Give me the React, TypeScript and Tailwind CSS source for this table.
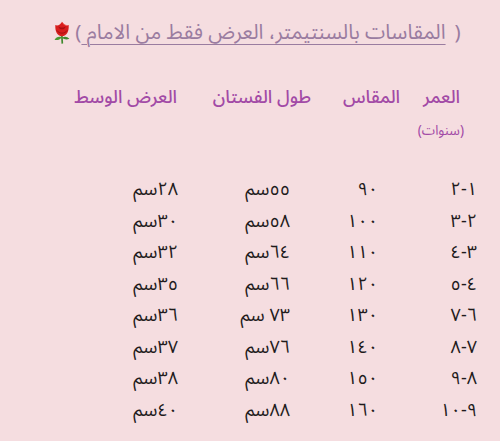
import React from "react";

const rows: [string, string, string, string][] = [
  ["١-٢", "٩٠", "٥٥سم", "٢٨سم"],
  ["٢-٣", "١٠٠", "٥٨سم", "٣٠سم"],
  ["٣-٤", "١١٠", "٦٤سم", "٣٢سم"],
  ["٤-٥", "١٢٠", "٦٦سم", "٣٥سم"],
  ["٦-٧", "١٣٠", "٧٣ سم", "٣٦سم"],
  ["٧-٨", "١٤٠", "٧٦سم", "٣٧سم"],
  ["٨-٩", "١٥٠", "٨٠سم", "٣٨سم"],
  ["٩-١٠", "١٦٠", "٨٨سم", "٤٠سم"],
];

function Rose() {
  return (
    <svg width="18" height="23" viewBox="0 0 17 21" className="inline-block">
      <path d="M8.3 12 L8.8 21" stroke="#3f8a2e" strokeWidth="1.6" />
      <path d="M8.4 15 C5 14 3 15 1.5 17.5 C4.5 18 6.5 17.3 8.4 15Z" fill="#4c9a34" />
      <path d="M8.6 15.5 C11 14 13.5 14.5 15.5 16.5 C12.5 17.5 10.5 17 8.6 15.5Z" fill="#3f8a2e" />
      <path d="M2.2 3.5 C1.8 9.5 4 14 8.5 14 C13 14 15.3 9.5 14.8 3.5 C12.3 5 10 2.5 8.5 0.5 C7 2.5 4.7 5 2.2 3.5Z" fill="#d81e1e" />
      <path d="M5 4.5 C6.5 6.2 10.5 6.2 12 4.5 C11 8.5 6 8.5 5 4.5Z" fill="#a80f12" />
      <path d="M3.6 8.5 C6 12 11 12 13.4 8.5" stroke="#9c0e10" strokeWidth="0.8" fill="none" />
      <path d="M8.5 0.5 C9.5 2.5 11 3.6 12.8 3.8" stroke="#f0524a" strokeWidth="0.8" fill="none" />
    </svg>
  );
}

export default function App() {
  return (
    <div
      dir="rtl"
      className="w-[500px] h-[441px] bg-[#f5dde0] overflow-hidden"
      style={{ fontFamily: '"Noto Sans Arabic", "Noto Sans", "DejaVu Sans", sans-serif' }}
    >
      <div className="pt-[18px] pl-[14px] flex justify-center items-center h-[47px] text-[20.5px] leading-[30px] text-[#9a7ca0]">
        <span>(</span>
        <span className="mr-[9px] underline decoration-1 underline-offset-[5px]">
          {"المقاسات بالسنتيمتر، العرض فقط من الامام\u00a0"}
        </span>
        <span>)</span>
        <span className="mr-[4px] flex items-center">
          <Rose />
        </span>
      </div>

      <div className="mt-[36px] pr-[40px] flex text-[18px] leading-[28px] text-[#a24aa6] font-medium">
        <div className="w-[60px]">العمر</div>
        <div className="w-[89px]">المقاس</div>
        <div className="w-[134px]">طول الفستان</div>
        <div>العرض الوسط</div>
      </div>
      <div className="mt-[10px] pr-[36px] text-[13.5px] leading-[20px] text-[#a24aa6]">(سنوات)</div>

      <div className="mt-[33px] pr-[23px] grid grid-cols-[99px_88px_112px_150px] text-[18px] leading-[31.5px] text-[#1f1b1c]">
        {rows.map((r, i) => (
          <React.Fragment key={i}>
            <div>{r[0]}</div>
            <div>{r[1]}</div>
            <div>{r[2]}</div>
            <div>{r[3]}</div>
          </React.Fragment>
        ))}
      </div>
    </div>
  );
}
